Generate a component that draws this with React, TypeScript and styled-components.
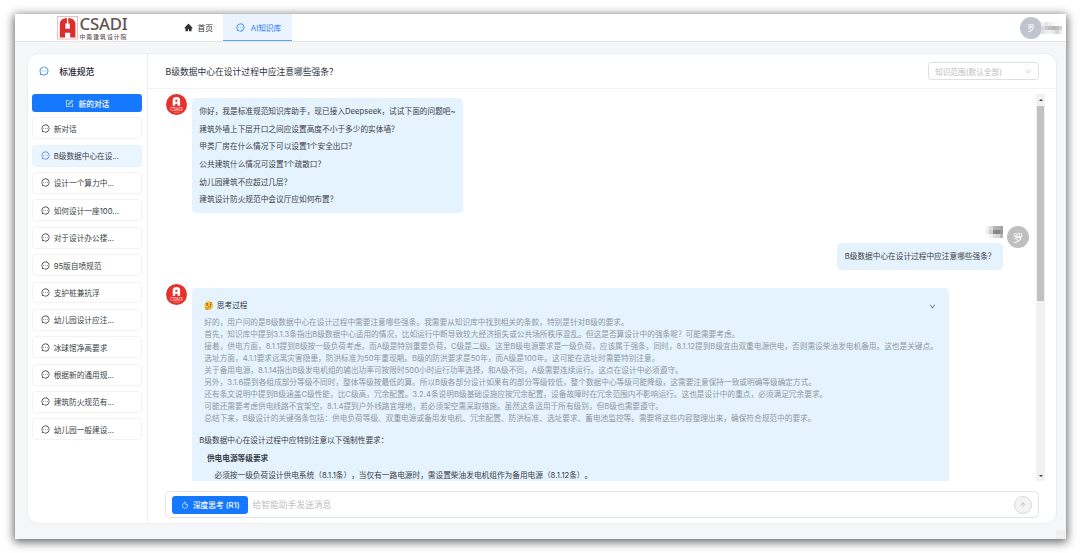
import React from "react";
import styled, { createGlobalStyle, css } from "styled-components";
import {
  AiFillHome,
  AiOutlineArrowUp,
  AiOutlineDown,
  AiOutlineFire,
  AiOutlineForm,
  AiOutlineMessage,
} from "react-icons/ai";

const GlobalStyle = createGlobalStyle`
  *, *::before, *::after { box-sizing: border-box; }
  body {
    margin: 0;
    background: #fff;
    font-family: Inter, "Noto Sans CJK SC", sans-serif;
    font-size: 7.68px;
    color: #3a3f45;
    text-spacing-trim: space-all;
    overflow: hidden;
  }
  svg { display: block; flex: none; }
`;

const Page = styled.div`
  width: 1080px;
  height: 553px;
  padding: 14px 14.5px 14px 15px;
`;

const Window = styled.div`
  position: relative;
  display: flex;
  flex-direction: column;
  height: 525px;
  background: #f4f6f8;
  box-shadow: 0 2px 9px 1px rgba(0, 0, 0, 0.62);
`;

const TopBar = styled.header`
  display: flex;
  height: 28px;
  flex: none;
  background: #fff;
  border-bottom: 1px solid #e3e5e9;
`;

const Logo = styled.div`
  display: flex;
  gap: 1.5px;
  width: 157.5px;
  padding: 2px 0 0 42px;
`;

const LogoText = styled.div`
  display: flex;
  flex-direction: column;
  color: #5f5450;
`;

const LogoName = styled.div`
  height: 16.5px;
  font: 500 16.8px/16.5px "Noto Sans", sans-serif;
  letter-spacing: -0.2px;
`;

const LogoSub = styled.div`
  font-size: 5.8px;
  font-weight: 500;
  line-height: 7px;
  letter-spacing: 1.05px;
  white-space: nowrap;
`;

const NavItem = styled.a<{ $active?: boolean }>`
  display: flex;
  align-items: center;
  gap: ${(p) => (p.$active ? 5.5 : 5)}px;
  height: 27px;
  padding: 0 ${(p) => (p.$active ? 10.8 : 10.5)}px 0 ${(p) => (p.$active ? 13 : 11)}px;
  color: #303133;
  ${(p) =>
    p.$active &&
    css`
      color: #1677ff;
      background: #ebf3ff;
      border-bottom: 1px solid #58a4ff;
    `}
`;

const UserArea = styled.div`
  display: flex;
  align-items: center;
  margin-left: auto;
  padding-right: 3.5px;
`;

const Avatar = styled.div<{ $tone: string; $small?: boolean }>`
  display: flex;
  align-items: center;
  justify-content: center;
  flex: none;
  width: 22px;
  height: 22px;
  margin-right: ${(p) => (p.$small ? -1 : 0)}px;
  border-radius: 50%;
  background: ${(p) => p.$tone};
  color: #fff;
  font-size: ${(p) => (p.$small ? 7.5 : 10)}px;
`;

const Card = styled.div`
  display: flex;
  margin: 11px 9px 0 12px;
  height: 471px;
  background: #fff;
  border: 1px solid #eceef0;
  border-radius: 12px;
  overflow: hidden;
`;

const Sidebar = styled.aside`
  display: flex;
  flex-direction: column;
  width: 120px;
  flex: none;
  padding: 0 5px 0 4.3px;
  border-right: 1px solid #eeeff1;
`;

const SideTitle = styled.h1`
  display: flex;
  align-items: center;
  gap: 10px;
  height: 34px;
  margin: 0 0 6px;
  padding-left: 7px;
  font-size: 8.78px;
  font-weight: 500;
  color: #1f2733;
  svg { color: #1677ff; }
`;

const NewChat = styled.button`
  display: flex;
  align-items: center;
  justify-content: center;
  gap: 4.5px;
  height: 18px;
  padding: 0;
  border: 0;
  border-radius: 3.3px;
  background: #1677ff;
  color: #fff;
  font: inherit;
  font-weight: 500;
`;

const HistoryList = styled.div`
  display: flex;
  flex-direction: column;
  gap: 5.5px;
  margin-top: 5.3px;
`;

const HistoryItem = styled.div<{ $active?: boolean }>`
  display: flex;
  align-items: center;
  gap: 3.6px;
  height: 21.88px;
  padding-left: 7.8px;
  border: 1px solid ${(p) => (p.$active ? "#e6f3ff" : "#f3f3f4")};
  border-radius: 4px;
  background: ${(p) => (p.$active ? "#eaf5ff" : "#fff")};
  svg { color: ${(p) => (p.$active ? "#3b7cff" : "#333")}; }
`;

const Main = styled.main`
  display: flex;
  flex-direction: column;
  flex: 1;
  min-width: 0;
`;

const MainHeader = styled.div`
  display: flex;
  align-items: center;
  justify-content: space-between;
  height: 35px;
  flex: none;
  padding: 0 17px 0 17.5px;
  border-bottom: 1px solid #f1f2f3;
  font-size: 8.78px;
  color: #2c333d;
`;

const Select = styled.div`
  display: flex;
  align-items: center;
  justify-content: space-between;
  width: 110.5px;
  height: 18px;
  padding: 0 6px;
  border: 1px solid #dfdfdf;
  border-radius: 3.3px;
  font-size: 7.68px;
  color: #bdbdbd;
`;

const Scroller = styled.div`
  display: flex;
  height: 387px;
  margin-top: 5px;
  padding: 0 10.5px 0 17.5px;
  overflow: hidden;
`;

const Messages = styled.div`
  flex: 1;
  min-width: 0;
  height: 386.6px;
  overflow: hidden;
`;

const Message = styled.div<{ $gap?: number }>`
  display: flex;
  gap: 5px;
  margin-top: ${(p) => p.$gap ?? 0}px;
`;

const UserMessage = styled.div`
  display: flex;
  justify-content: flex-end;
  gap: 4.3px;
  margin-top: 13.5px;
  padding-right: 7px;
`;

const UserColumn = styled.div`
  display: flex;
  flex-direction: column;
  align-items: flex-end;
  gap: 4.7px;
`;

const Bubble = styled.div<{ $width: number; $height?: number }>`
  width: ${(p) => p.$width}px;
  height: ${(p) => (p.$height ? p.$height + "px" : "auto")};
  margin-top: 4px;
  padding: 5.4px 7.5px 0 7.8px;
  border-radius: 4.5px;
  background: #e5f3ff;
  line-height: 17.55px;
  white-space: nowrap;
`;

const QuestionBubble = styled(Bubble)`
  margin-top: 0;
`;

const Thinking = styled.section`
  padding: 4.1px 2px 0 5px;
  color: #8f969c;
  line-height: 12.07px;
`;

const ThinkingHead = styled.div`
  display: flex;
  align-items: center;
  gap: 3px;
  height: 17px;
  margin-bottom: 2.2px;
  color: #30353a;
  svg:last-child { margin-left: auto; margin-right: 4px; }
`;

const Answer = styled.div`
  margin-top: 6.7px;
`;

const Indent = styled.div<{ $level: number; $bold?: boolean }>`
  padding-left: ${(p) => p.$level * 7.6}px;
  font-weight: ${(p) => (p.$bold ? 700 : 400)};
`;

const ScrollTrack = styled.div`
  display: flex;
  flex-direction: column;
  align-items: center;
  justify-content: space-between;
  width: 9px;
  height: 386.6px;
  background: #f1f1f1;
`;

const ScrollThumb = styled.div`
  width: 7.5px;
  height: 195px;
  margin-bottom: auto;
  background: #c1c1c1;
`;

const ScrollArrow = styled.div<{ $down?: boolean }>`
  display: flex;
  align-items: center;
  justify-content: center;
  height: ${(p) => (p.$down ? 10 : 12.3)}px;
  &::before {
    content: "";
    border: 2.2px solid transparent;
    border-top: ${(p) => (p.$down ? "2.4px solid #444" : "0")};
    border-bottom: ${(p) => (p.$down ? "0" : "2.4px solid #444")};
  }
`;

const Composer = styled.div`
  display: flex;
  align-items: center;
  height: 27px;
  margin: 10px 17px 0 17.3px;
  padding: 0 6px 0 5.7px;
  border: 1px solid #e3e4e6;
  border-radius: 4.5px;
`;

const ThinkButton = styled.button`
  display: flex;
  align-items: center;
  justify-content: center;
  gap: 4px;
  width: 76.5px;
  height: 18px;
  padding: 0;
  border: 0;
  border-radius: 3.3px;
  background: #1677ff;
  color: #fff;
  font: inherit;
  font-weight: 500;
`;

const Placeholder = styled.span`
  flex: 1;
  padding-left: 4px;
  font-size: 8.78px;
  color: #bfbfbf;
`;

const SendButton = styled.button`
  display: flex;
  align-items: center;
  justify-content: center;
  width: 18px;
  height: 18px;
  padding: 0;
  border: 1px solid #d9d9d9;
  border-radius: 50%;
  background: #f3f3f3;
  color: #b8b8b8;
`;

const ScrollCorner = styled.div`
  position: absolute;
  right: 0;
  bottom: 0;
  width: 9.5px;
  height: 9.5px;
  background: #efefef;
`;

const history = [
  "新对话",
  "B级数据中心在设...",
  "设计一个算力中...",
  "如何设计一座100...",
  "对于设计办公楼...",
  "95版自喷规范",
  "支护桩兼抗浮",
  "幼儿园设计应注...",
  "冰球馆净高要求",
  "根据新的通用规...",
  "建筑防火规范有...",
  "幼儿园一般建设...",
];

const greeting = [
  "你好，我是标准规范知识库助手，现已接入Deepseek，试试下面的问题吧~",
  "建筑外墙上下层开口之间应设置高度不小于多少的实体墙？",
  "甲类厂房在什么情况下可以设置1个安全出口？",
  "公共建筑什么情况可设置1个疏散口？",
  "幼儿园建筑不应超过几层？",
  "建筑设计防火规范中会议厅应如何布置？",
];

const reasoning = [
  "好的，用户问的是B级数据中心在设计过程中需要注意哪些强条。我需要从知识库中找到相关的条款，特别是针对B级的要求。",
  "首先，知识库中提到3.1.3条指出B级数据中心适用的情况，比如运行中断导致较大经济损失或公共场所秩序混乱。但这是否算设计中的强条呢？可能需要考虑。",
  "接着，供电方面，8.1.1提到B级按一级负荷考虑，而A级是特别重要负荷，C级是二级。这里B级电源要求是一级负荷，应该属于强条。同时，8.1.12提到B级宜由双重电源供电，否则需设柴油发电机备用。这也是关键点。",
  "选址方面，4.1.1要求远离灾害隐患，防洪标准为50年重现期。B级的防洪要求是50年，而A级是100年。这可能在选址时需要特别注意。",
  "关于备用电源，8.1.14指出B级发电机组的输出功率可按限时500小时运行功率选择，和A级不同，A级需要连续运行。这点在设计中必须遵守。",
  "另外，3.1.6提到各组成部分等级不同时，整体等级按最低的算。所以B级各部分设计如果有的部分等级较低，整个数据中心等级可能降级，这需要注意保持一致或明确等级确定方式。",
  "还有条文说明中提到B级涵盖C级性能，比C级高，冗余配置。3.2.4条说明B级基础设施应按冗余配置，设备故障时在冗余范围内不影响运行。这也是设计中的重点，必须满足冗余要求。",
  "可能还需要考虑供电线路不宜架空，8.1.4提到户外线路宜埋地，若必须架空需采取措施。虽然这条适用于所有级别，但B级也需要遵守。",
  "总结下来，B级设计的关键强条包括：供电负荷等级、双重电源或备用发电机、冗余配置、防洪标准、选址要求、蓄电池监控等。需要将这些内容整理出来，确保符合规范中的要求。",
];

const question = "B级数据中心在设计过程中应注意哪些强条？";

const LogoMark = () => (
  <svg width="21" height="24" viewBox="0 0 21 24">
    <rect x="0.5" y="0.5" width="20" height="22.5" fill="#fff" stroke="#f0a09c" strokeWidth="0.7" />
    <path
      d="M2.8 21.6V8.4Q2.8 3.2 8.2 2.2L9.9 2v5.6H8.4v5.2h4.4V7.6h-1.5V2l1.7.2Q18.4 3.2 18.4 8.4v13.2h-5.2v-4.9H8v4.9Z"
      fill="#dc2f2b"
      fillRule="evenodd"
    />
  </svg>
);

const BotAvatar = () => (
  <svg width="21" height="21" viewBox="0 0 21 21">
    <circle cx="10.5" cy="10.5" r="10.5" fill="#e6322d" />
    <path d="M6.7 11.7V6.4Q6.7 3 10.4 3t3.7 3.4v5.3h-2.5V9.7H9.2v2Z M9.4 5.8v1.9h2V5.8Z" fill="#fff" fillRule="evenodd" />
    <text x="10.5" y="16.7" fontSize="4.4" textAnchor="middle" textLength="12.5" fill="#ffe4e2">CSADI</text>
    <path d="M7.5 18.2h6" stroke="#f6a7a3" strokeWidth="0.6" />
  </svg>
);

const ThinkingFace = () => (
  <svg width="9.5" height="9.5" viewBox="0 0 19 19">
    <circle cx="9.5" cy="9.2" r="8.7" fill="#f9c23a" />
    <path d="M3.5 5.7Q5.7 3.8 8 5.4M11.5 4Q14 2.4 16 4.3" stroke="#69401c" strokeWidth="1.2" fill="none" />
    <circle cx="6.3" cy="8" r="1.3" fill="#4d3018" />
    <circle cx="13.2" cy="7.3" r="1.3" fill="#4d3018" />
    <path d="M8 12.5q3-1.8 5.4-.4" stroke="#69401c" strokeWidth="1.4" fill="none" />
    <path d="M2 13.4q1.8-1 2.8.3l4.6-1.2q1.5.3.2 1.5l-2 1q1 2-1.2 3-3.9.8-4.4-4.6Z" fill="#f0a622" stroke="#b67212" strokeWidth="0.5" />
  </svg>
);

const mosaicTop = [
  ["#f0f0f1", "#e0e1e4", "#eeeeef", "#f7f7f7", "#fafafa", "#fff"],
  ["#d7d9de", "#c9c9cb", "#bdbdbd", "#b5b5b5", "#bcbcbc", "#d0d0d0"],
  ["#dfe2e7", "#ededee", "#f1f1f1", "#e6e6e6", "#d6d6d6", "#e9e9e9"],
];
const mosaicName = [
  ["#f2f2f2", "#dcdcdc", "#b5b5b5", "#b0b0b0", "#a8a8a8"],
  ["#ececec", "#d0d0d0", "#8c8c8c", "#858585", "#999"],
  ["#fff", "#f3f3f3", "#dedede", "#d5d5d5", "#b5b5b5"],
];

const Mosaic = ({ cells, w, h }: { cells: string[][]; w: number; h: number }) => (
  <svg width={cells[0].length * w} height={cells.length * h} shapeRendering="crispEdges">
    {cells.map((row, y) =>
      row.map((fill, x) => <rect key={`${x}-${y}`} x={x * w} y={y * h} width={w} height={h} fill={fill} />)
    )}
  </svg>
);

export default function App() {
  return (
    <Page>
      <GlobalStyle />
      <Window>
        <TopBar>
          <Logo>
            <LogoMark />
            <LogoText>
              <LogoName>CSADI</LogoName>
              <LogoSub>中南建筑设计院</LogoSub>
            </LogoText>
          </Logo>
          <NavItem><AiFillHome size={9} />首页</NavItem>
          <NavItem $active><AiOutlineMessage size={9} />AI知识库</NavItem>
          <UserArea>
            <Avatar $tone="#bfc4ce" $small>罗</Avatar>
            <Mosaic cells={mosaicTop} w={3.5} h={4} />
          </UserArea>
        </TopBar>
        <Card>
          <Sidebar>
            <SideTitle><AiOutlineMessage size={10} />标准规范</SideTitle>
            <NewChat><AiOutlineForm size={9} />新的对话</NewChat>
            <HistoryList>
              {history.map((title, i) => (
                <HistoryItem key={title} $active={i === 1}>
                  <AiOutlineMessage size={9} />
                  {title}
                </HistoryItem>
              ))}
            </HistoryList>
          </Sidebar>
          <Main>
            <MainHeader>
              {question}
              <Select>知识范围(默认全部)<AiOutlineDown size={7} /></Select>
            </MainHeader>
            <Scroller>
              <Messages>
                <Message>
                  <BotAvatar />
                  <Bubble $width={271.7} $height={114.8}>
                    {greeting.map((line) => <div key={line}>{line}</div>)}
                  </Bubble>
                </Message>
                <UserMessage>
                  <UserColumn>
                    <Mosaic cells={mosaicName} w={3.4} h={4} />
                    <QuestionBubble $width={165.8} $height={27.2}>{question}</QuestionBubble>
                  </UserColumn>
                  <Avatar $tone="#bfbfbf">罗</Avatar>
                </UserMessage>
                <Message $gap={14}>
                  <BotAvatar />
                  <Bubble $width={757.7} $height={230}>
                    <Thinking>
                      <ThinkingHead>
                        <ThinkingFace />
                        思考过程
                        <AiOutlineDown size={7} />
                      </ThinkingHead>
                      {reasoning.map((line) => <div key={line}>{line}</div>)}
                    </Thinking>
                    <Answer>
                      <div>B级数据中心在设计过程中应特别注意以下强制性要求：</div>
                      <Indent $level={1} $bold>供电电源等级要求</Indent>
                      <Indent $level={2}>必须按一级负荷设计供电系统（8.1.1条），当仅有一路电源时，需设置柴油发电机组作为备用电源（8.1.12条）。</Indent>
                    </Answer>
                  </Bubble>
                </Message>
              </Messages>
              <ScrollTrack>
                <ScrollArrow />
                <ScrollThumb />
                <ScrollArrow $down />
              </ScrollTrack>
            </Scroller>
            <Composer>
              <ThinkButton><AiOutlineFire size={8} />深度思考 (R1)</ThinkButton>
              <Placeholder>给智能助手发送消息</Placeholder>
              <SendButton><AiOutlineArrowUp size={8} /></SendButton>
            </Composer>
          </Main>
        </Card>
        <ScrollCorner />
      </Window>
    </Page>
  );
}
